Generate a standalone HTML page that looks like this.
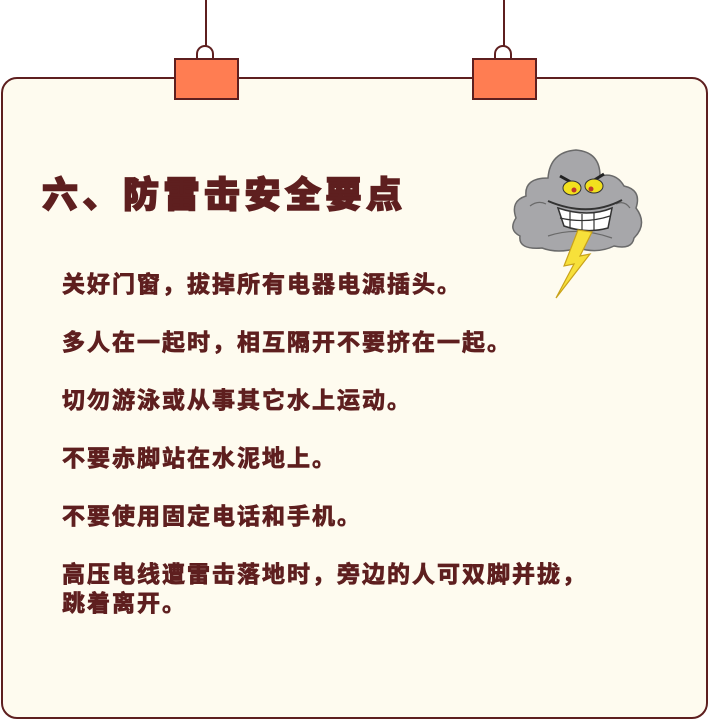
<!DOCTYPE html>
<html><head><meta charset="utf-8"><style>
body{margin:0;width:709px;height:719px;background:#fff;position:relative;overflow:hidden;font-family:"Liberation Sans","Noto Sans CJK SC",sans-serif;color:#5e1f1f}
.card{position:absolute;left:1px;top:77px;width:703px;height:638px;border:2px solid #5e1f1f;border-radius:16px;background:#fefbef}
.str{position:absolute;width:2px;background:#5e1f1f;top:0;height:46px}
.loop{position:absolute;width:14px;height:16px;border:2px solid #5e1f1f;border-bottom:none;border-radius:9px 9px 0 0;top:45px}
.clip{position:absolute;top:58px;width:61px;height:38px;background:#ff7d52;border:2px solid #5e1f1f}
h1{position:absolute;left:42px;top:166px;margin:0;font-size:36px;font-weight:900;letter-spacing:4.5px;-webkit-text-stroke:1.5px #5e1f1f}
.p{position:absolute;left:62px;font-size:23px;font-weight:bold;line-height:29px;margin:0;letter-spacing:2px;-webkit-text-stroke:0.8px #5e1f1f}
</style></head><body>
<div class="card"></div>
<div class="str" style="left:205px"></div><div class="loop" style="left:196px"></div><div class="clip" style="left:174px"></div>
<div class="str" style="left:503px"></div><div class="loop" style="left:494px"></div><div class="clip" style="left:472px"></div>
<h1>六、防雷击安全要点</h1>
<svg style="position:absolute;left:508px;top:146px" width="140" height="155" viewBox="0 0 140 155">
<path d="M8 72 Q2 55 18 50 Q16 32 40 32 Q42 6 68 4 Q92 6 92 30 Q108 26 116 40 Q134 44 128 62 Q140 78 126 92 Q124 104 106 100 Q90 108 70 102 Q50 108 34 102 Q10 104 12 90 Q0 84 8 72Z" fill="#a7a7aa" stroke="#6a6a6a" stroke-width="1.5"/>
<path d="M22 60 Q30 54 38 58 M108 58 Q116 54 122 62 M40 90 Q70 80 104 92" stroke="#6a6a6a" stroke-width="1.2" fill="none"/>
<path d="M52 30 L70 40 M96 28 L80 38" stroke="#222" stroke-width="3"/>
<ellipse cx="64" cy="42" rx="9" ry="7" fill="#f2e01e" stroke="#333"/><ellipse cx="86" cy="40" rx="9" ry="7" fill="#f2e01e" stroke="#333"/>
<circle cx="66" cy="44" r="2.5" fill="#c0392b"/><circle cx="83" cy="43" r="2.5" fill="#c0392b"/>
<path d="M40 55 Q80 72 114 54" stroke="#333" stroke-width="2" fill="none"/>
<path d="M50 62 Q80 72 104 62 L100 82 Q78 88 56 80Z" fill="#fff" stroke="#333" stroke-width="1.5"/>
<path d="M62 66 V82 M74 68 V85 M86 67 V84 M52 72 Q78 78 102 70" stroke="#333" stroke-width="1.2" fill="none"/>
<path d="M70 84 L56 120 L66 118 L48 152 L82 108 L72 110 L84 86Z" fill="#f7e03a" stroke="#c9a21a" stroke-width="1.2"/>
</svg>
<p class="p" style="top:270px">关好门窗，拔掉所有电器电源插头。</p>
<p class="p" style="top:328px">多人在一起时，相互隔开不要挤在一起。</p>
<p class="p" style="top:386px">切勿游泳或从事其它水上运动。</p>
<p class="p" style="top:444px">不要赤脚站在水泥地上。</p>
<p class="p" style="top:502px">不要使用固定电话和手机。</p>
<p class="p" style="top:560px">高压电线遭雷击落地时，旁边的人可双脚并拢，<br>跳着离开。</p>
</body></html>
